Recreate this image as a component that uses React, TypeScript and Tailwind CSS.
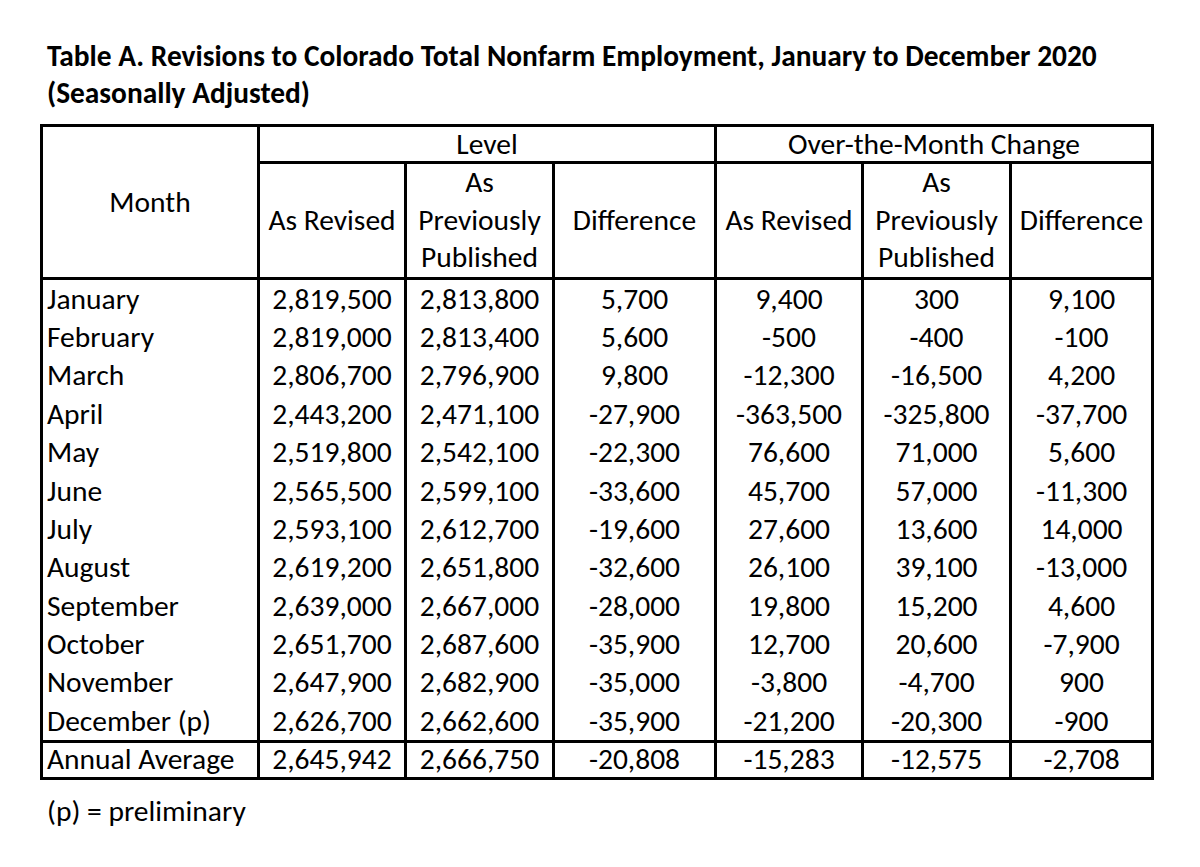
import React from 'react';

const rows: string[][] = [
  ['January', '2,819,500', '2,813,800', '5,700', '9,400', '300', '9,100'],
  ['February', '2,819,000', '2,813,400', '5,600', '-500', '-400', '-100'],
  ['March', '2,806,700', '2,796,900', '9,800', '-12,300', '-16,500', '4,200'],
  ['April', '2,443,200', '2,471,100', '-27,900', '-363,500', '-325,800', '-37,700'],
  ['May', '2,519,800', '2,542,100', '-22,300', '76,600', '71,000', '5,600'],
  ['June', '2,565,500', '2,599,100', '-33,600', '45,700', '57,000', '-11,300'],
  ['July', '2,593,100', '2,612,700', '-19,600', '27,600', '13,600', '14,000'],
  ['August', '2,619,200', '2,651,800', '-32,600', '26,100', '39,100', '-13,000'],
  ['September', '2,639,000', '2,667,000', '-28,000', '19,800', '15,200', '4,600'],
  ['October', '2,651,700', '2,687,600', '-35,900', '12,700', '20,600', '-7,900'],
  ['November', '2,647,900', '2,682,900', '-35,000', '-3,800', '-4,700', '900'],
  ['December (p)', '2,626,700', '2,662,600', '-35,900', '-21,200', '-20,300', '-900'],
];

const annual = ['Annual Average', '2,645,942', '2,666,750', '-20,808', '-15,283', '-12,575', '-2,708'];

export default function App() {
  return (
    <div className="w-[1200px] h-[867px] bg-white text-black font-['Carlito','Calibri','Lato',sans-serif] text-[29.5px]">
      {/* Title */}
      <div className="pt-[38px] pl-[47px] font-bold text-[29.4px] leading-[37px]">
        <div>Table A. Revisions to Colorado Total Nonfarm Employment, January to December 2020</div>
        <div>(Seasonally Adjusted)</div>
      </div>

      <table className="mt-[12px] ml-[40px] w-[1114px] table-fixed border-collapse border-[3px] border-black">
        <colgroup>
          <col className="w-[217px]" />
          <col className="w-[147px]" />
          <col className="w-[148px]" />
          <col className="w-[162px]" />
          <col className="w-[147px]" />
          <col className="w-[148px]" />
          <col className="w-[142px]" />
        </colgroup>
        <thead>
          <tr className="h-[37px]">
            <th rowSpan={2} className="border-[3px] border-black font-normal leading-[38px]">Month</th>
            <th colSpan={3} className="border-[3px] border-black font-normal leading-[34px]">Level</th>
            <th colSpan={3} className="border-[3px] border-black font-normal leading-[34px]">Over-the-Month Change</th>
          </tr>
          <tr className="h-[115px]">
            <th className="border-[3px] border-black font-normal leading-[37.6px]">As Revised</th>
            <th className="border-[3px] border-black font-normal leading-[37.6px]">As<br />Previously<br />Published</th>
            <th className="border-[3px] border-black font-normal leading-[37.6px]">Difference</th>
            <th className="border-[3px] border-black font-normal leading-[37.6px]">As Revised</th>
            <th className="border-[3px] border-black font-normal leading-[37.6px]">As<br />Previously<br />Published</th>
            <th className="border-[3px] border-black font-normal leading-[37.6px]">Difference</th>
          </tr>
        </thead>
        <tbody>
          {rows.map((r) => (
            <tr key={r[0]} className="h-[38.4px] leading-[38px]">
              {r.map((c, i) => (
                <td
                  key={i}
                  className={i === 0 ? 'border-x-[3px] border-black pl-[4px] text-left' : 'border-x-[3px] border-black text-center'}
                >
                  {c}
                </td>
              ))}
            </tr>
          ))}
          <tr className="h-[37px] leading-[32px]">
            {annual.map((c, i) => (
              <td
                key={i}
                className={i === 0 ? 'border-[3px] border-black pl-[4px] pb-[2px] text-left' : 'border-[3px] border-black pb-[2px] text-center'}
              >
                {c}
              </td>
            ))}
          </tr>
        </tbody>
      </table>

      <div className="mt-[12px] pl-[47px] leading-[38px]">(p) = preliminary</div>
    </div>
  );
}
